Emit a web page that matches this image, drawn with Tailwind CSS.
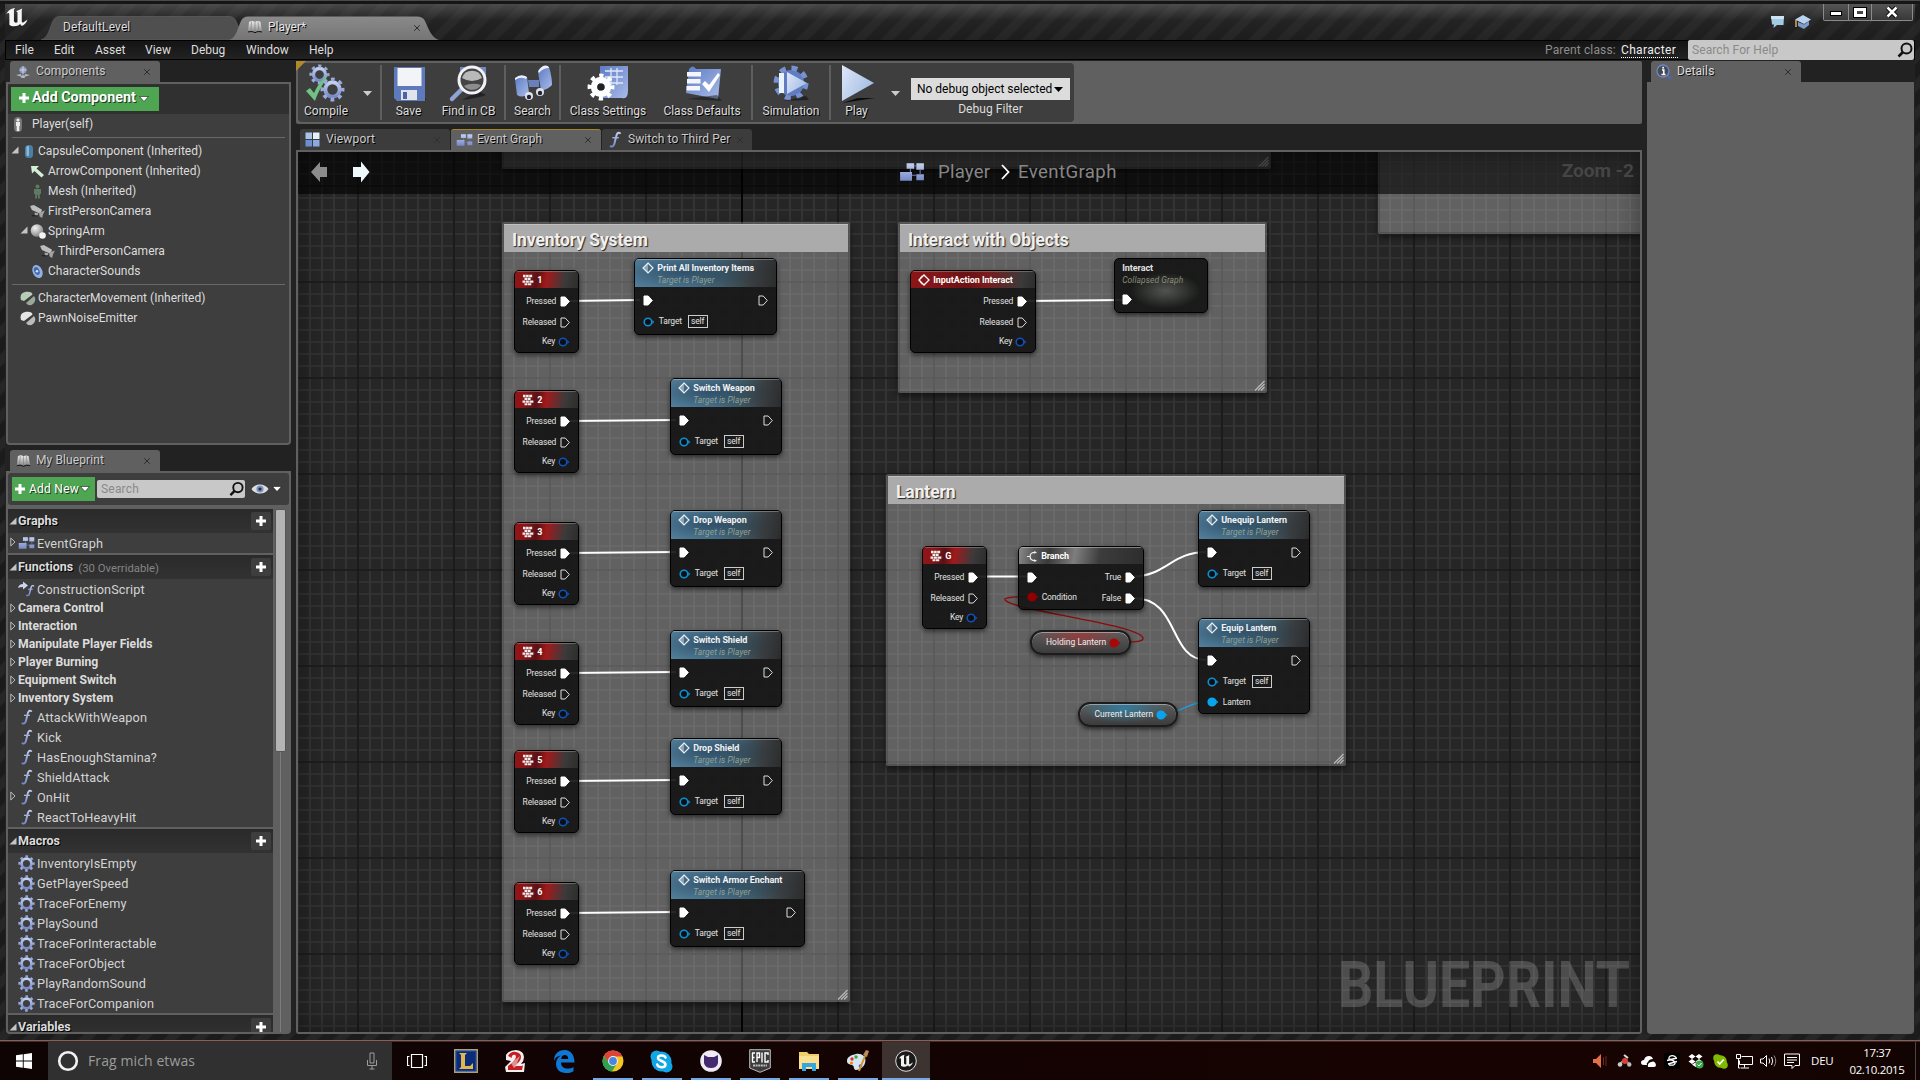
<!DOCTYPE html>
<html lang="en">
<head>
<meta charset="utf-8">
<title>Player - Blueprint Editor</title>
<script src="https://cdn.jsdelivr.net/npm/@tailwindcss/browser@4"></script>
</head>
<body class="w-[1920px] h-[1080px] overflow-hidden bg-[#222] text-[12px] leading-none text-[#dcdcdc] [font-family:Roboto,'Liberation_Sans',sans-serif] select-none">

<!-- shared icon symbols -->
<svg class="absolute w-0 h-0">
  <defs>
    <linearGradient id="blu" x1="0" y1="0" x2="0" y2="1"><stop offset="0" stop-color="#c3d0f0"/><stop offset="1" stop-color="#7688c6"/></linearGradient>
    <linearGradient id="blu2" x1="0" y1="0" x2="1" y2="1"><stop offset="0" stop-color="#5c7bc4"/><stop offset="1" stop-color="#a9bce8"/></linearGradient>
    <linearGradient id="gry" x1="0" y1="0" x2="0" y2="1"><stop offset="0" stop-color="#eee"/><stop offset="1" stop-color="#888"/></linearGradient>
    <radialGradient id="ball" cx=".35" cy=".3" r=".8"><stop offset="0" stop-color="#f4f4f4"/><stop offset="1" stop-color="#777"/></radialGradient>
    <linearGradient id="playg" x1="0" y1="0" x2="1" y2=".6"><stop offset="0" stop-color="#dfe7f8"/><stop offset="1" stop-color="#a3bde4"/></linearGradient>
  </defs>
  <symbol id="i-x" viewBox="0 0 8 8"><path d="M1.2 1.2 6.8 6.8M6.8 1.2 1.2 6.8" stroke="#2e2e2e" stroke-width="1"/></symbol>
  <symbol id="i-plus" viewBox="0 0 12 12"><path d="M4.5 1h3v3.5H11v3H7.500V11h-3V7.500H1v-3h3.500z" fill="#fff"/></symbol>
  <symbol id="i-down" viewBox="0 0 10 6"><path d="M.5.5h9L5 5.500z" fill="#fff" stroke="#000" stroke-width=".5"/></symbol>
  <symbol id="i-open" viewBox="0 0 8 8"><path d="M7.500.5V7.500H.5z" fill="#c4c4c4"/></symbol>
  <symbol id="i-closed" viewBox="0 0 6 10"><path d="M.8 1v8L5 5z" fill="none" stroke="#bbb" stroke-width="1"/></symbol>
  <symbol id="i-search" viewBox="0 0 16 16"><circle cx="9.500" cy="6.500" r="5" fill="none" stroke="#111" stroke-width="2"/><path d="M6 10 1.500 14.500" stroke="#111" stroke-width="2.600"/></symbol>
  <symbol id="i-book" viewBox="0 0 16 14"><path d="M2 2c2-1.500 4-1.500 6 0 2-1.500 4-1 5.500 0L15 11.500c-2-1-5-1-7 .5-2-1.500-5-1.500-7-.5z" fill="url(#gry)"/><path d="M8 2v9.500M4.500 1.500 4 10M11 1.500l.8 8.500" stroke="#777" stroke-width=".6"/><path d="M1 12c3-.8 5-.5 7 .8 2-1.300 4-1.600 7-.8" stroke="#111" fill="none"/></symbol>
  <symbol id="i-graph" viewBox="0 0 24 18"><path d="M7 1h7v5H7zM16 1h7v6h-7zM1 9h11v8H1zM16 11h7v5.500h-7z" fill="url(#blu)"/><path d="M14 3.500h2M12 12h4M10.500 6v3M19.500 7v4" stroke="#6f7fae"/></symbol>
  <symbol id="i-view" viewBox="0 0 15 15"><path d="M.5.5h6.500V7H.5z" fill="#a8c4e8"/><path d="M8 .5h6.500V7H8z" fill="#e6f2f6"/><path d="M.5 8h6.500v6.500H.5z" fill="#6d8fd0"/><path d="M8 8h6.500v6.500H8z" fill="#8caae0"/></symbol>
  <symbol id="i-f" viewBox="0 0 14 17"><path d="M12.500 2.800C11.500 1 9.300 1.300 8.600 4L6.300 13C5.700 15.400 3.600 16.200 2 15" fill="none" stroke="url(#blu)" stroke-width="2"/><path d="M4.300 6h6.500v1.400H4.300z" fill="#a3b2e0"/></symbol>
  <symbol id="i-gear" viewBox="0 0 24 24"><circle cx="12" cy="12" r="6.900" fill="none" stroke="url(#blu)" stroke-width="3.800"/><circle cx="12" cy="12" r="9.700" fill="none" stroke="#9aabdb" stroke-width="3.600" stroke-dasharray="3.600 4.018" stroke-dashoffset="1.800"/></symbol>
  <symbol id="i-gearw" viewBox="0 0 24 24"><circle cx="12" cy="12" r="6" fill="none" stroke="#fff" stroke-width="5.500"/><circle cx="12" cy="12" r="9.700" fill="none" stroke="#fff" stroke-width="3.600" stroke-dasharray="3.600 4.018" stroke-dashoffset="1.800"/></symbol>
  <symbol id="i-cam" viewBox="0 0 16 14"><path d="M0 1l4-1 9 5-2 4.500-9-4z" fill="#bdbdbd"/><path d="M10 8l6-2-2 4-1 4-3-2zM5 8l4 1-1 3-3-1z" fill="#a2a2a2"/><path d="M2 11.500h7" stroke="#111" stroke-width="1.500" opacity=".6"/></symbol>
  <symbol id="i-exec" viewBox="0 0 10 11"><path d="M1 1h4.200L9.300 5.500 5.200 10H1z" fill="#fff" stroke="#fff" stroke-linejoin="round"/></symbol>
  <symbol id="i-execo" viewBox="0 0 10 11"><path d="M1 1h4.200L9.300 5.500 5.200 10H1z" fill="none" stroke="#ddd" stroke-linejoin="round"/></symbol>
  <symbol id="i-fn" viewBox="0 0 12 12"><path d="M6 1l5 5-5 5-5-5z" fill="none" stroke="#e8eef2" stroke-width="1.200"/><path d="M6 1v10L1 6z" fill="#e8eef2" opacity=".45"/></symbol>
  <symbol id="i-event" viewBox="0 0 12 12"><path d="M6 1l5 5-5 5-5-5z" fill="none" stroke="#fff" stroke-width="1.300"/><path d="M4 1.500 1 6l3 4.500" stroke="#fff" fill="none" stroke-width=".8"/></symbol>
  <symbol id="i-key" viewBox="0 0 12 12"><path d="M1 .8h2.600v2.400H1zM4.100.8h2.600v2.400H4.100zM7.200.8h3v2.400h-3zM2.500 3.700h2.600v2.300H2.500zM5.600 3.700h3v2.300h-3zM.5 6.500h2.600v2.200H.5zM3.600 6.500h3.300v2.200H3.600zM7.400 6.500h4v2.200h-4zM2.500 9.200h3v2h-3zM6 9.200h3.300v2H6z" fill="#f0f0f0"/></symbol>
  <symbol id="i-branch" viewBox="0 0 12 12"><path d="M1 6h3M10 1.500C6 1.500 4.500 3 4.500 6s1.500 4.500 5.500 4.500" fill="none" stroke="#eee" stroke-width="1.300"/><path d="M9 0l3 1.500L9 3zM9 9l3 1.500L9 12z" fill="#eee"/></symbol>
  <symbol id="i-u" viewBox="0 0 24 22"><path d="M1 7.500C2 4 5.500 1.500 10 1L8.800 3v11.500c0 1.500 1.500 2.500 3.700 1.500V5.500L11 4.500 17.500 1.500 17 3.500v12l1.200 1L23 13c-1 3.500-3 5.500-6 7l-1.800-2.200c-2.500 3-8.700 3-11.200.7V8.500C4 5.800 2.500 6 1 7.500z" fill="#f4f4f4"/></symbol>
</svg>

<div class="flex flex-col w-[1920px] h-[1080px]">
<!-- ============ editor window ============ -->
<div class="h-[1041px] w-full flex flex-col border-t border-[#4a4a4a] bg-[repeating-linear-gradient(135deg,#1b1b1b_0_9px,#262626_11px_18px,#1b1b1b_20px)]">

  <!-- title bar -->
  <div class="h-[39px] shrink-0 pt-[4px] px-[5px] border-t-[3px] border-[#161616] flex flex-col">
  <div class="h-[36px] -mt-[4px] relative flex bg-[linear-gradient(to_bottom,rgba(100,100,100,.62),rgba(50,50,50,.35)_45%,rgba(34,34,34,.25))]">
    <svg class="w-[24px] h-[21px] mt-[3px] shrink-0"><use href="#i-u"/></svg>
    <div class="ml-[12px] mt-[12px] w-[202px] h-[24px] relative flex items-center pl-[22px]">
      <svg class="absolute inset-0 w-[202px] h-[24px]" viewBox="0 0 202 24"><path d="M0 24C7 22 8 14 12 5Q14 .5 19 .5H188Q193 .5 195 5C199 14 200 20 202 24z" fill="#4f4f4f" stroke="#666" stroke-width=".6"/></svg>
      <span class="relative -mt-[2px] [text-shadow:1px_1px_0_#000] tracking-[.1px]">DefaultLevel</span>
    </div>
    <div class="-ml-[14px] mt-[12px] w-[212px] h-[24px] relative flex items-center pl-[18px] pr-[20px]">
      <svg class="absolute inset-0 w-[212px] h-[24px]" viewBox="0 0 212 24"><defs><linearGradient id="tg" x1="0" y1="0" x2="0" y2="1"><stop offset="0" stop-color="#8a8a8a"/><stop offset="1" stop-color="#757575"/></linearGradient></defs><path d="M0 24C7 22 8 14 12 5Q14 .5 19 .5H188Q194 .5 196 5C200 14 203 22 210 24z" fill="url(#tg)"/></svg>
      <svg class="relative w-[16px] h-[14px] -mt-[2px]"><use href="#i-book"/></svg>
      <span class="relative ml-[5px] flex-1 -mt-[2px] [text-shadow:1px_1px_0_#000] text-[#e6e6e6]">Player*</span>
      <svg class="relative w-[8px] h-[8px]"><use href="#i-x"/></svg>
    </div>
    <div class="flex-1"></div>
    <svg class="w-[16px] h-[16px] mt-[10px]" viewBox="0 0 16 16"><path d="M1 2h13l-.5 9H7l-3.500 3 .5-3.500H2z" fill="#a5cbe4"/><path d="M1 2h13l-.2 3H1.200z" fill="#cde4f2"/></svg>
    <svg class="w-[18px] h-[16px] mt-[10px] ml-[8px]" viewBox="0 0 18 16"><path d="M9 1l8 4.500L10 10 1 5.500z" fill="#b9d2ee"/><path d="M4 8v4l6 3 5-4V7l-5 3.500z" fill="#7c9dcc"/><path d="M2 6v7" stroke="#e0a860" stroke-width="1.500"/></svg>
    <div class="flex ml-[11px] h-[17px] mr-[2px] border border-t-0 border-[#8a8a8a] rounded-b-[2px] bg-[linear-gradient(#555,#383838)]">
      <div class="w-[25px] border-r border-[#8a8a8a] grid place-items-center"><div class="w-[12px] h-[5px] bg-white border border-black mt-[3px]"></div></div>
      <div class="w-[23px] border-r border-[#8a8a8a] grid place-items-center"><div class="w-[12px] h-[9px] border-[3px] border-white outline outline-black"></div></div>
      <div class="w-[40px] grid place-items-center"><svg class="w-[14px] h-[12px]" viewBox="0 0 14 12"><path d="M2.500 1.500l9 9M11.500 1.500l-9 9" stroke="#000" stroke-width="4.500"/><path d="M2.500 1.500l9 9M11.500 1.500l-9 9" stroke="#fff" stroke-width="2.600"/></svg></div>
    </div>
  </div>
  </div>

  <!-- menu bar -->
  <div class="h-[20px] shrink-0 mx-[5px] border border-black bg-[linear-gradient(#141414,#222)] flex items-center pl-[9px] text-[#dedede]">
    <span class="w-[39px]">File</span><span class="w-[41px]">Edit</span><span class="w-[50px]">Asset</span><span class="w-[46px]">View</span><span class="w-[55px]">Debug</span><span class="w-[63px]">Window</span><span>Help</span>
    <span class="flex-1"></span>
    <span class="text-[#8e8e8e] w-[76px] tracking-[.15px]">Parent class:</span>
    <span class="w-[57px] mr-[10px] border-b border-dotted border-white pb-px mt-[2px] tracking-[.35px] text-[#eee]">Character</span>
    <div class="w-[226px] h-[20px] bg-[#c8c8c8] rounded-[2px] flex items-center justify-between pl-[4px] pr-[1px] text-[#8a8a8a]"><span class="tracking-[.1px]">Search For Help</span><svg class="w-[16px] h-[16px]"><use href="#i-search"/></svg></div>
  </div>

  <!-- docking area -->
  <div class="flex-1 mx-[5px] mb-[6px] bg-[#222] flex pt-[1px] pl-[1px] min-h-0">

    <!-- left column -->
    <div class="w-[285px] flex flex-col">
      <div class="h-[21px] ml-[4px] w-[150px] bg-[#606060] rounded-t-[3px] flex items-center pl-[6px] pr-[9px]">
        <svg class="w-[14px] h-[14px]" viewBox="0 0 14 14"><circle cx="7" cy="5" r="3.500" fill="#8b9cc0"/><path d="M0 10l5-1 1 3zM14 10l-5-1-1 3zM7 9l2 4H5z" fill="#b5b9c6"/><path d="M7 1v8M3.500 5h7" stroke="#dde" stroke-width=".8"/></svg>
        <span class="ml-[6px] flex-1 text-[#ccc] tracking-[.1px] [text-shadow:1px_1px_0_#222] -mt-[2px]">Components</span>
        <svg class="w-[8px] h-[8px]"><use href="#i-x"/></svg>
      </div>
      <div class="h-[363px] border-2 border-[#606060] rounded-b-[4px] bg-[#3e3e3e]">
        <div class="h-[30px] rounded-t-[3px] bg-[#303030] pl-[3px] pt-[3px]">
          <div class="w-[148px] h-[24px] bg-[#4ea552] flex items-center pl-[7px] pb-[3px] text-white font-bold text-[14.300px] [text-shadow:1px_1px_0_#1c3c1c]"><svg class="w-[12px] h-[12px] mr-[2px]"><use href="#i-plus"/></svg>Add Component<svg class="w-[10px] h-[6px] ml-[3px] mt-[3px]"><use href="#i-down"/></svg></div>
        </div>
        <div id="components" class="flex flex-col"></div>
      </div>

      <div class="h-[21px] mt-[5px] ml-[4px] w-[150px] bg-[#606060] rounded-t-[3px] flex items-center pl-[6px] pr-[9px]">
        <svg class="w-[15px] h-[14px]"><use href="#i-book"/></svg>
        <span class="ml-[5px] flex-1 text-[#ccc] tracking-[.1px] [text-shadow:1px_1px_0_#222] -mt-[2px]">My Blueprint</span>
        <svg class="w-[8px] h-[8px]"><use href="#i-x"/></svg>
      </div>
      <div class="flex-1 min-h-0 border-2 border-[#606060] rounded-b-[4px] bg-[#606060] flex flex-col overflow-hidden">
        <div class="h-[32px] shrink-0 rounded-[3px] bg-[#3e3e3e] flex items-center pl-[4px]">
          <div class="w-[83px] h-[24px] bg-[#4ea552] flex items-center pl-[2px] text-white tracking-[.25px] [text-shadow:1px_1px_0_#1c3c1c]"><svg class="w-[12px] h-[12px] mr-[3px]"><use href="#i-plus"/></svg><span class="w-[49px] whitespace-nowrap">Add New</span><svg class="w-[10px] h-[6px] ml-[2px] shrink-0"><use href="#i-down"/></svg></div>
          <div class="w-[148px] h-[18px] ml-[2px] bg-[#c8c8c8] rounded-[2px] flex items-center justify-between pl-[4px] pr-px text-[#8a8a8a]"><span class="tracking-[.2px]">Search</span><svg class="w-[15px] h-[16px]"><use href="#i-search"/></svg></div>
          <svg class="w-[18px] h-[12px] ml-[6px]" viewBox="0 0 18 12"><path d="M.5 6C4 0 14 0 17.500 6 14 12 4 12 .5 6z" fill="#d9dce0"/><circle cx="9" cy="6" r="3.600" fill="#7c90bd"/><circle cx="9" cy="6" r="1.600" fill="#222b40"/></svg>
          <svg class="w-[10px] h-[6px] ml-[3px] shrink-0"><use href="#i-down"/></svg>
        </div>
        <div class="flex-1 min-h-0 flex pt-[4px]">
          <div id="blueprint" class="w-[265px] flex flex-col overflow-hidden"></div>
          <div class="flex-1 flex flex-col items-center pr-px">
            <div class="w-[11px] h-[243px] bg-[#b4b4b4] border border-[#555] rounded-[2px] shrink-0"></div>
            <div class="w-px flex-1 bg-[#7c7c7c]"></div>
          </div>
        </div>
      </div>
    </div>

    <!-- centre column -->
    <div class="ml-[5px] w-[1346px] flex flex-col">
      <div class="h-[63px] bg-[#606060] rounded-[2px] p-[2px] relative">
        <div class="w-[776px] h-[59px] rounded-[4px] bg-[#3e3e3e] flex items-stretch">
          <div class="w-[82px] flex">
            <div class="w-[57px] pl-[6px] flex flex-col">
              <svg class="w-[42px] h-[40px] mt-[1px]" viewBox="0 0 42 40"><use href="#i-gear" x="5" y="0" width="21" height="21"/><use href="#i-gear" x="16" y="13" width="25" height="25"/><path d="M2 27l4-3 4 5C13 22 18 15 25 10 20 18 14 28 11 37z" fill="#6fc184"/></svg>
              <span class="mt-[1px] [text-shadow:1px_1px_0_#000]">Compile</span>
            </div>
            <svg class="w-[9px] h-[5px] mt-[28px] ml-[8px]" viewBox="0 0 9 5"><path d="M0 0h9L4.500 5z" fill="#ccc"/></svg>
          </div>
          <div class="w-[2px] my-[2px] bg-[#5e5e5e]"></div>
          <div class="w-[122px] flex">
            <div class="w-[53px] flex flex-col items-center">
              <svg class="w-[36px] h-[40px] mt-[1px]" viewBox="0 0 36 40"><path d="M4 36h31l-3-7z" fill="#111" opacity=".7"/><path d="M3 3h31v34H6l-3-3z" fill="#5f79bd"/><path d="M6.500 4h24v18h-24z" fill="#f2f4f8"/><path d="M10 26h16v10H10z" fill="#dfe3ec"/><path d="M12 28h4v7h-4z" fill="#4b64a6"/></svg>
              <span class="mt-[1px] [text-shadow:1px_1px_0_#000]">Save</span>
            </div>
            <div class="w-[67px] flex flex-col items-center">
              <svg class="w-[42px] h-[40px] mt-[1px]" viewBox="0 0 42 40"><path d="M14 36q16-2 24-5l-8-4z" fill="#111" opacity=".6"/><path d="M30 3h8v18h-8zM12 3h8v8h-8z" fill="#7488bd"/><path d="M14 25 4 35" stroke="#8fa3d4" stroke-width="4.500" stroke-linecap="round"/><circle cx="24" cy="16" r="13" fill="#444" stroke="#f0f2f6" stroke-width="3"/><path d="M14 14A10.500 10.500 0 0 1 34 14Q24 20 14 14z" fill="#b9b9b9"/><path d="M15.500 22Q24 18 33 21a10.500 10.500 0 0 1-17 1z" fill="#8d8d8d"/></svg>
              <span class="mt-[1px] whitespace-nowrap [text-shadow:1px_1px_0_#000]">Find in CB</span>
            </div>
          </div>
          <div class="w-[2px] my-[2px] bg-[#5e5e5e]"></div>
          <div class="w-[53px] flex flex-col items-center">
            <svg class="w-[40px] h-[40px] mt-[1px]" viewBox="0 0 40 40"><path d="M2 15q5-5 12-2l2 16q-6 6-12 2z" fill="url(#blu2)"/><path d="M25 8q6-7 11-5 3 10 3 18-6 6-11 5z" fill="url(#blu2)"/><path d="M2 14q6-5 12-1l-1 2q-5-3-11 1zM25 7q5-7 10-5l1 2q-6 0-10 5z" fill="#eef"/><path d="M15 16h11v7H16z" fill="#6b80bb"/><circle cx="16" cy="32" r="4" fill="#dfe2ea"/><circle cx="27" cy="28" r="4" fill="#dfe2ea"/><circle cx="16" cy="33" r="2.200" fill="#223"/><circle cx="27" cy="29" r="2.200" fill="#223"/></svg>
            <span class="mt-[1px] [text-shadow:1px_1px_0_#000]">Search</span>
          </div>
          <div class="w-[2px] my-[2px] bg-[#5e5e5e]"></div>
          <div class="w-[190px] flex">
            <div class="w-[94px] flex flex-col items-center">
              <svg class="w-[42px] h-[40px] mt-[1px]" viewBox="0 0 42 40"><path d="M13 2h28v24q0 10-6 8H13z" fill="url(#blu2)"/><path d="M18 7h18M18 13h18M18 19h18M24 4v17M30 4v17" stroke="#dfe9fa" stroke-width="1.300"/><use href="#i-gearw" x="0" y="9" width="28" height="28"/><circle cx="14" cy="23" r="3.600" fill="#222"/></svg>
              <span class="mt-[1px] whitespace-nowrap [text-shadow:1px_1px_0_#000]">Class Settings</span>
            </div>
            <div class="w-[94px] flex flex-col items-center">
              <svg class="w-[42px] h-[40px] mt-[1px]" viewBox="0 0 42 40"><path d="M8 5q4-5 7 0h25l-3 30-32-6z" fill="url(#blu2)"/><path d="M6 35l35 2-5-6z" fill="#111" opacity=".5"/><path d="M6 8h14v4.500H6zM6 15h13.500v4.500H6zM5.500 22h13.500v4.500H5.500z" fill="#f4f6fb"/><path d="M21 20l3-3 4 4 9-12 2 2-11 17z" fill="#fff"/></svg>
              <span class="mt-[1px] whitespace-nowrap [text-shadow:1px_1px_0_#000]">Class Defaults</span>
            </div>
          </div>
          <div class="w-[2px] my-[2px] bg-[#5e5e5e]"></div>
          <div class="w-[76px] flex flex-col items-center">
            <svg class="w-[42px] h-[40px] mt-[1px]" viewBox="0 0 42 40"><circle cx="21" cy="19" r="13" fill="#5f7cc4"/><circle cx="21" cy="19" r="15" fill="none" stroke="#7791d2" stroke-width="5" stroke-dasharray="6 5.780"/><path d="M9 9h5v20H9z" fill="#e8f4fa"/><path d="M17 8l20 11-20 11z" fill="url(#playg)"/><path d="M14 37l22-5 3 4z" fill="#111" opacity=".6"/></svg>
            <span class="mt-[1px] [text-shadow:1px_1px_0_#000]">Simulation</span>
          </div>
          <div class="w-[2px] my-[2px] bg-[#5e5e5e]"></div>
          <div class="w-[80px] flex">
            <div class="w-[51px] flex flex-col items-center">
              <svg class="w-[38px] h-[40px] mt-[1px]" viewBox="0 0 38 40"><path d="M4 39l33-5H20z" fill="#000" opacity=".8"/><path d="M4 1l32 18L4 37z" fill="url(#playg)"/></svg>
              <span class="mt-[1px] [text-shadow:1px_1px_0_#000]">Play</span>
            </div>
            <svg class="w-[9px] h-[5px] mt-[28px] ml-[9px]" viewBox="0 0 9 5"><path d="M0 0h9L4.500 5z" fill="#ccc"/></svg>
          </div>
          <div class="flex flex-col items-center pt-[15px]">
            <div class="w-[159px] h-[22px] bg-[#dcdcdc] flex items-center justify-between pl-[6px] pr-[7px] text-black"><span class="whitespace-nowrap tracking-[-.02px]">No debug object selected</span><svg class="w-[9px] h-[5px] shrink-0" viewBox="0 0 9 5"><path d="M0 0h9L4.500 5z"/></svg></div>
            <span class="mt-[3px] tracking-[.05px]">Debug Filter</span>
          </div>
        </div>
        <svg class="absolute left-0 top-0 w-[10px] h-[10px]" viewBox="0 0 10 10"><path d="M0 0h10L0 10z" fill="#b08a2a"/></svg>
      </div>

      <!-- document tabs -->
      <div class="h-[21px] mt-[5px] ml-[4px] flex gap-[1px] [text-shadow:1px_1px_0_#000]">
        <div class="w-[150px] bg-[#3c3c3c] rounded-t-[3px] flex items-center pl-[5px] pr-[9px]"><svg class="w-[15px] h-[15px]"><use href="#i-view"/></svg><span class="ml-[6px] flex-1 -mt-[2px] text-[#ccc] tracking-[.15px]">Viewport</span><svg class="w-[8px] h-[8px]"><use href="#i-x"/></svg></div>
        <div class="w-[150px] bg-[#606060] border-t border-[#a58526] rounded-t-[3px] flex items-center pl-[5px] pr-[9px]"><svg class="w-[17px] h-[14px]"><use href="#i-graph"/></svg><span class="ml-[4px] flex-1 -mt-[2px] text-[#ccc] tracking-[.1px]">Event Graph</span><svg class="w-[8px] h-[8px]"><use href="#i-x"/></svg></div>
        <div class="w-[150px] bg-[#3c3c3c] rounded-t-[3px] flex items-center pl-[6px] pr-[8px]"><svg class="w-[14px] h-[17px]"><use href="#i-f"/></svg><span class="ml-[6px] flex-1 -mt-[2px] text-[#ccc] tracking-[.1px] whitespace-nowrap">Switch to Third Per</span><svg class="w-[8px] h-[8px]"><use href="#i-x"/></svg></div>
      </div>

      <!-- graph view -->
      <div class="flex-1 min-h-0 border-2 border-[#606060] rounded-b-[3px] relative overflow-hidden bg-[#262626]">
        <!-- canvas in screen coordinates -->
        <div class="absolute -left-[298px] -top-[152px] w-[1920px] h-[1080px]">
          <svg class="absolute inset-0 w-[1920px] h-[1080px]" viewBox="0 0 1920 1080">
            <defs>
              <pattern id="minor" x="352" y="276" width="12" height="12" patternUnits="userSpaceOnUse"><path d="M6 0V12M0 6H12" stroke="#353535" stroke-width="1.700"/></pattern>
              <pattern id="major" x="310" y="234" width="96" height="96" patternUnits="userSpaceOnUse"><path d="M48 0V96M0 48H96" stroke="#161616" stroke-width="1.700"/></pattern>
            </defs>
            <rect width="1920" height="1080" fill="url(#minor)"/><rect width="1920" height="1080" fill="url(#major)"/>
            <path d="M742 0V1080" stroke="#000" stroke-width="1.700"/>
          </svg>
          <div id="comments"></div>
          <svg class="absolute inset-0 w-[1920px] h-[1080px]" viewBox="0 0 1920 1080" fill="none" stroke="#fff" stroke-width="2">
            <path d="M567 301 640 300M567 421 676 420M567 553 676 552M567 673 676 672M567 781 676 780M567 913 676 912M1024 301 1124 300M975 576.500H1028"/>
            <path d="M1133 576.500C1165 576.500 1172 552 1206 552M1133 598C1180 598 1168 659 1206 660" stroke-width="2"/>
            <path d="M1113 642C1130 642 1144 642.500 1143 638 1140 629 1090 621 1036 610 1012 605 1004 601 1005 599 1007 596.500 1018 597 1030 596.500" stroke="#8c0a0a" stroke-width="1.300"/>
            <path d="M1162 714C1182 714 1186 702 1208 702" stroke="#1f9ad6" stroke-width="1.400"/>
          </svg>
          <div id="nodes"></div>
          <svg class="absolute left-[1330px] top-[930px] w-[308px] h-[96px]" viewBox="0 0 308 96"><text x="8" y="76.500" textLength="292" lengthAdjust="spacingAndGlyphs" class="text-[65px] font-bold fill-white/18">BLUEPRINT</text></svg>
        </div>
        <div class="absolute inset-0 shadow-[inset_0_0_28px_rgba(0,0,0,.4)]"></div>
        <!-- breadcrumb strip -->
        <div class="absolute inset-x-0 top-0 h-[42px] bg-black/60 flex items-center pl-[12px] pb-[2px]">
          <svg class="w-[18px] h-[24px]" viewBox="0 0 18 24"><path d="M1 12 10 2v5h7v10h-7v5z" fill="#8c8c8c"/></svg>
          <svg class="w-[18px] h-[24px] ml-[24px]" viewBox="0 0 18 24"><path d="M17.500 12 9 1.500V7H1v10h8v5.500z" fill="#eef8fa"/></svg>
          <svg class="w-[26px] h-[20px] ml-[529px]" viewBox="0 0 24 18"><use href="#i-graph" width="24" height="18"/></svg>
          <span class="ml-[13px] text-[18.600px] text-[#868686] w-[63px] tracking-[.2px]">Player</span>
          <svg class="w-[9px] h-[16px]" viewBox="0 0 9 16"><path d="M1 1l6.500 7L1 15" fill="none" stroke="#fff" stroke-width="1.800"/></svg>
          <span class="ml-[8px] text-[18.600px] text-[#868686] tracking-[.4px]">EventGraph</span>
          <span class="ml-auto mr-[6px] text-[19px] font-bold text-[#454545] -mt-[4px]">Zoom -2</span>
        </div>
      </div>
    </div>

    <!-- details column -->
    <div class="ml-[5px] w-[267px] flex flex-col">
      <div class="h-[21px] ml-[4px] w-[150px] bg-[#606060] rounded-t-[3px] flex items-center pl-[5px] pr-[9px]">
        <svg class="w-[16px] h-[16px]" viewBox="0 0 16 16"><path d="M11 11l4 4" stroke="#4d67a8" stroke-width="2.500"/><circle cx="7" cy="7" r="6" fill="#444a58" stroke="#6d86c4" stroke-width="1.300"/><path d="M6 6h1.800v4.500M5.500 10.500h4" stroke="#fff" stroke-width="1.500" fill="none"/><path d="M6.300 2.800h1.800v1.800H6.300z" fill="#fff"/></svg>
        <span class="ml-[5px] flex-1 text-[#ddd] tracking-[.1px] [text-shadow:1px_1px_0_#111] -mt-[2px]">Details</span>
        <svg class="w-[8px] h-[8px]"><use href="#i-x"/></svg>
      </div>
      <div class="flex-1 bg-[#606060] rounded-b-[4px]"></div>
    </div>
  </div>
  <div class="h-px bg-[#6a6a6a] shrink-0"></div>
</div>

<!-- ============ taskbar ============ -->
<div class="h-[39px] bg-[linear-gradient(to_right,#0e0404,#140303_50%,#170302_80%,#120402)] border-t border-[#5a2019] flex items-stretch [font-family:'Open_Sans','Noto_Sans',sans-serif] text-white">
  <div class="w-[48px] bg-[#0e0404] grid place-items-center"><svg class="w-[16px] h-[16px]" viewBox="0 0 16 16"><path d="M0 2.300 6.800 1.300V7.600H0zM7.700 1.200 16 0V7.600H7.700zM0 8.400H6.800V14.700L0 13.700zM7.700 8.400H16V16L7.700 14.800z" fill="#fff"/></svg></div>
  <div class="w-[344px] bg-[#303030] flex items-center pl-[9px] pr-[14px]">
    <svg class="w-[22px] h-[22px]" viewBox="0 0 22 22"><circle cx="11" cy="11" r="8.800" fill="none" stroke="#f2f2f2" stroke-width="2.600"/></svg>
    <span class="ml-[9px] flex-1 text-[14px] text-[#9c9c9c] leading-[20px] tracking-[.1px]">Frag mich etwas</span>
    <svg class="w-[12px] h-[18px]" viewBox="0 0 12 18"><path d="M4 1h4v10H4zM1.500 8v5.500h9V8M6 13.500V17M3.500 17h5" fill="none" stroke="#9c9c9c"/></svg>
  </div>
  <div class="w-[49px] grid place-items-center"><svg class="w-[20px] h-[16px]" viewBox="0 0 20 16"><path d="M4.500 1.500h11v13h-11zM2.500 3.500H.5v9h2M17.500 3.500h2v9h-2" fill="none" stroke="#fff" stroke-width="1.200"/></svg></div>
  <div class="w-[49px] grid place-items-center"><svg class="w-[24px] h-[24px]" viewBox="0 0 24 24"><path d="M.7.7h22.600v22.600H.7z" fill="#12409a" stroke="#b0a16c" stroke-width="1.400"/><path d="M3 3h18v18H3z" fill="#0c2c78"/><path d="M5 4h8l-2 2v11h5l3-3v6H5l2-2V6z" fill="#e2b84e"/></svg></div>
  <div class="w-[49px] grid place-items-center"><svg class="w-[24px] h-[24px]" viewBox="0 0 24 24"><path d="M3 6Q6 1 13 1q8 1 8 7 0 4-3 7l4-1-1 9H3l-1-5 6-6-5-1z" fill="#f4eeee"/><path d="M5 7Q8 2 13 3q5 1 5 5 0 4-6 9h7l1-1-1 5H5v-4q7-5 8-9 0-3-3-2-2 1-1 3z" fill="#c41d22"/><path d="M8 14l9-7-3 7 4-1-7 6z" fill="#f4eeee" opacity=".55"/></svg></div>
  <div class="w-[49px] grid place-items-center"><svg class="w-[22px] h-[24px]" viewBox="0 0 22 24"><path d="M1 12C1 5 5 1 11.500 1 18 1 21.500 6 21.500 13.500H8c0 4 3 6 6.500 6 2.500 0 4.500-.6 6-1.600v4.300C18.500 23.500 16 24 13 24 6.500 24 3 20 3 15c0-4 2-7 5-8.500C4 7 2 9 1 12zM8.200 10h7c0-2.500-1.200-4-3.400-4-2 0-3.300 1.500-3.600 4z" fill="#0f78d4"/></svg></div>
  <div class="w-[49px] grid place-items-center relative"><svg class="w-[22px] h-[22px]" viewBox="0 0 22 22"><circle cx="11" cy="11" r="10.500" fill="#f3c623"/><path d="M1.800 6A10.500 10.500 0 0 1 20.500 6.500H11L7 13z" fill="#dd4437"/><path d="M1.800 6A10.500 10.500 0 0 0 10 21.500L14.500 14 7 13z" fill="#2fa24f"/><circle cx="11" cy="11" r="4.900" fill="#f2f2f2"/><circle cx="11" cy="11" r="3.900" fill="#4a86e0"/></svg><div class="absolute bottom-0 w-[40px] h-[2px] bg-[#76a9ea]"></div></div>
  <div class="w-[49px] grid place-items-center relative"><svg class="w-[23px] h-[23px]" viewBox="0 0 23 23"><circle cx="11.500" cy="11.500" r="10" fill="#10a7e4"/><circle cx="6.500" cy="6.500" r="6" fill="#10a7e4"/><circle cx="16.500" cy="16.500" r="6" fill="#10a7e4"/><path d="M15.500 7.500C14.500 5 8 4.800 8 8c0 3.500 7.500 2.500 7.500 6.500 0 3.500-7.500 3.500-8.300 0" fill="none" stroke="#fff" stroke-width="2.500" stroke-linecap="round"/></svg><div class="absolute bottom-0 w-[40px] h-[2px] bg-[#76a9ea]"></div></div>
  <div class="w-[49px] grid place-items-center relative"><svg class="w-[22px] h-[22px]" viewBox="0 0 22 22"><circle cx="11" cy="11" r="10.800" fill="#efeaf6"/><path d="M4 5l4 2h6l4-2v8q-1 5-7 5t-7-5z" fill="#45296f"/></svg><div class="absolute bottom-0 w-[40px] h-[2px] bg-[#76a9ea]"></div></div>
  <div class="w-[49px] grid place-items-center relative"><svg class="w-[22px] h-[24px]" viewBox="0 0 22 24"><path d="M.7.7h20.600V19L11 23.300.7 19z" fill="#3c3c3c" stroke="#bbb"/><path d="M3 4h3M3 8.500h2.500M3 13h3M3.500 4v9M8 13V4h2.500v4.500H8M13 3.500V13.500M19 6V4h-3v9h3v-2" fill="none" stroke="#fff" stroke-width="1.400"/><path d="M4 16.500h14" stroke="#bbb" stroke-width="2" stroke-dasharray="2 .6"/></svg><div class="absolute bottom-0 w-[40px] h-[2px] bg-[#76a9ea]"></div></div>
  <div class="w-[49px] grid place-items-center relative"><svg class="w-[22px] h-[20px]" viewBox="0 0 22 20"><path d="M1 1h8l2 2h10v15H1z" fill="#efcf68"/><path d="M1 5h20v13H1z" fill="#fbe18f"/><path d="M4 20v-8h14v8h-4v-4H8v4z" fill="#35a7de"/></svg><div class="absolute bottom-0 w-[40px] h-[2px] bg-[#76a9ea]"></div></div>
  <div class="w-[49px] grid place-items-center relative"><svg class="w-[24px] h-[24px]" viewBox="0 0 24 24"><path d="M10 5c7-1 11 4 9 9-1 4-5 7-9 7-3 0-1-4-4-5s-5-1-5-4c0-4 4-6 9-7z" fill="#d6e6f2"/><circle cx="6" cy="10" r="1.700" fill="#d33"/><circle cx="10" cy="8" r="1.700" fill="#3a3"/><circle cx="5.500" cy="14" r="1.500" fill="#e80"/><circle cx="14.500" cy="17" r="1.800" fill="#36c"/><path d="M13 22 19 7" stroke="#d89232" stroke-width="2"/><path d="M17 6l3-5 3 1-2 6z" fill="#b98a5a"/></svg><div class="absolute bottom-0 w-[40px] h-[2px] bg-[#76a9ea]"></div></div>
  <div class="w-[48px] bg-[#3d3432] grid place-items-center relative"><svg class="w-[22px] h-[22px]" viewBox="0 0 22 22"><circle cx="11" cy="11" r="10.300" fill="#1a1a1a" stroke="#ddd"/><use href="#i-u" x="3.500" y="4" width="15" height="14"/></svg><div class="absolute bottom-0 w-[48px] h-[2px] bg-[#76a9ea]"></div></div>
  <div class="flex-1"></div>
  <div class="flex items-center">
    <div class="w-[24px] grid place-items-center"><svg class="w-[15px] h-[14px]" viewBox="0 0 15 14"><path d="M0 5h3l5-5v14L3 9H0z" fill="#e2714a"/><path d="M10.500 3v8M13 2v10" stroke="#6b2a18"/></svg></div>
    <div class="w-[24px] grid place-items-center"><svg class="w-[15px] h-[14px]" viewBox="0 0 15 14"><path d="M3 10 8 5l4 5" stroke="#999" stroke-width="2" fill="none"/><circle cx="8" cy="7" r="3" fill="#d8403a"/><circle cx="3" cy="10.500" r="2.300" fill="#ccc"/><circle cx="12.300" cy="10.500" r="2.200" fill="#bbb"/><path d="M7 1l4 3" stroke="#ddd" stroke-width="2"/></svg></div>
    <div class="w-[24px] grid place-items-center"><svg class="w-[15px] h-[11px]" viewBox="0 0 15 11"><path d="M3 9Q0 9 0 6.500T3 4q1-4 5-4 3 0 4 3-4 0-5 3-2 1-1 3zM7 11q-1-4 3-5 4-2 5 3 0 2-2 2z" fill="#fff"/></svg></div>
    <div class="w-[24px] grid place-items-center"><svg class="w-[16px] h-[16px] bg-black" viewBox="0 0 16 16"><path d="M12 4.500C9 1 4 3 5 6q4 1 6 3 1 4-6 3M3 7.500 13 5M4 11l9-2.500" fill="none" stroke="#fff" stroke-width="1.300"/></svg></div>
    <div class="w-[24px] grid place-items-center"><svg class="w-[16px] h-[16px]" viewBox="0 0 16 16"><path d="M4 1l3.500 2.500L4 6 .5 3.500zM11 1l3.500 2.500L11 6 7.500 3.500zM4 6l3.500 2.500L4 11 .5 8.500zM11 6l3.500 2.500L11 11 7.500 8.500zM4 11.500l3.500-2 3.500 2-3.500 2.500z" fill="#fff"/><circle cx="11.500" cy="11.500" r="4" fill="#3aa648"/><path d="M9.500 11.500l1.500 1.500 2.500-3" stroke="#fff" fill="none"/></svg></div>
    <div class="w-[24px] grid place-items-center"><svg class="w-[15px] h-[15px]" viewBox="0 0 15 15"><circle cx="7.500" cy="7.500" r="6.300" fill="#7fba00"/><circle cx="4" cy="4" r="3.800" fill="#7fba00"/><circle cx="11" cy="11" r="3.800" fill="#7fba00"/><path d="M4.500 7.500l2.200 2.500 4-4.500" stroke="#fff" stroke-width="1.700" fill="none"/></svg></div>
    <div class="w-[24px] grid place-items-center"><svg class="w-[17px] h-[15px]" viewBox="0 0 17 15"><path d="M5.500 2.500h11v8h-13v-4M.5.5h4v4h-4zM8.500 10.500v3M5 14h8M2.500 4.500V14h2" fill="none" stroke="#fff"/></svg></div>
    <div class="w-[24px] grid place-items-center"><svg class="w-[17px] h-[14px]" viewBox="0 0 17 14"><path d="M.5 5h2.500L6.500 1.500v11L3 9H.5zM9 4.500q1.500 2.500 0 5M11.500 3q2.500 4 0 8" fill="none" stroke="#fff"/><path d="M14 1.500q3.500 5.500 0 11" fill="none" stroke="#888"/></svg></div>
    <div class="w-[24px] grid place-items-center"><svg class="w-[16px] h-[17px]" viewBox="0 0 16 17"><path d="M.5 1h15v11.500H11L8 15.500 8 12.500H.5zM3 4.500h10M3 7h10M3 9.500h7" fill="none" stroke="#fff"/></svg></div>
    <span class="ml-[7px] w-[22px] text-[11.500px] tracking-[-.2px]">DEU</span>
    <div class="ml-[16px] w-[56px] text-center text-[11.500px] leading-[17px] tracking-[-.35px] whitespace-nowrap -mt-px"><div>17:37</div><div>02.10.2015</div></div>
    <div class="ml-[10px] w-px h-[38px] bg-[#4a4442] mr-[4px]"></div>
  </div>
</div>
</div>

<script>
const ico = (id, cls) => `<svg class="${cls}"><use href="#${id}"/></svg>`;

/* ---- component tree ---- */
const capsule = '<svg class="w-[15px] h-[15px]" viewBox="0 0 15 15"><rect x="4" y="1" width="8" height="13" rx="3.500" fill="#4a7fa6"/><rect x="5.500" y="2" width="2.500" height="10" rx="1" fill="#8db8d4"/></svg>';
const arrow = '<svg class="w-[15px] h-[15px]" viewBox="0 0 15 15"><path d="M1 2l8 0-2.500 2.500L14 11l-2.500 2.500L4.500 7 2 9.500z" fill="#d3efd6"/></svg>';
const person = (c) => `<svg class="w-[15px] h-[15px]" viewBox="0 0 15 15"><circle cx="7.500" cy="2.500" r="2" fill="${c}"/><path d="M4 5h7v5H9.800v4.500H8V11H7v3.500H5.200V10H4z" fill="${c}"/></svg>`;
const player = '<svg class="w-[10px] h-[15px]" viewBox="0 0 10 15"><rect x="1" y="0" width="8" height="15" rx="4" fill="#777"/><circle cx="5" cy="3" r="1.600" fill="#eee"/><path d="M3 5h4v4H6.300v5H3.700V9H3z" fill="#eee"/></svg>';
const arm = '<svg class="w-[16px] h-[15px]" viewBox="0 0 16 15"><circle cx="7" cy="6.500" r="6.300" fill="url(#ball)"/><circle cx="12.500" cy="11.500" r="3.300" fill="#f4f4f4"/></svg>';
const sound = '<svg class="w-[15px] h-[15px]" viewBox="0 0 15 15"><ellipse cx="7.500" cy="7.500" rx="4.800" ry="6.800" transform="rotate(-25 7.500 7.500)" fill="#8fb1e6"/><ellipse cx="6.800" cy="7" rx="2.600" ry="4" transform="rotate(-25 6.800 7)" fill="#46679f"/><circle cx="7" cy="7.300" r="1.300" fill="#c9ddf8"/></svg>';
const move = (c) => `<svg class="w-[16px] h-[15px]" viewBox="0 0 16 15"><path d="M1 9Q-1 2 6 .8 12 0 12.500 3.500L4 10z" fill="${c}"/><path d="M6 12l8-7q3 4-1 8-4 3-7-1z" fill="${c}" opacity=".75"/></svg>`;
const tree = [
  ['pl-[5px]', '', player, 'ml-[9px]', 'Player(self)'],
  'sep',
  ['pl-[3px]', 'i-open', capsule, 'ml-[2px]', 'CapsuleComponent (Inherited)'],
  ['pl-[22px]', '', arrow, 'ml-[3px]', 'ArrowComponent (Inherited)'],
  ['pl-[22px]', '', person('#5d7a62'), 'ml-[3px]', 'Mesh (Inherited)'],
  ['pl-[22px]', '', ico('i-cam', 'w-[15px] h-[13px]'), 'ml-[3px]', 'FirstPersonCamera'],
  ['pl-[12px]', 'i-open', arm, 'ml-[2px]', 'SpringArm'],
  ['pl-[32px]', '', ico('i-cam', 'w-[15px] h-[13px]'), 'ml-[3px]', 'ThirdPersonCamera'],
  ['pl-[22px]', '', sound, 'ml-[3px]', 'CharacterSounds'],
  'sep',
  ['pl-[12px]', '', move('#b8cdb8'), 'ml-[2px]', 'CharacterMovement (Inherited)'],
  ['pl-[12px]', '', move('#e6e6e6'), 'ml-[2px]', 'PawnNoiseEmitter'],
];
document.getElementById('components').innerHTML = tree.map(r => r === 'sep'
  ? '<div class="h-[7px] pt-[3px] mx-[4px]"><div class="h-px bg-[#686868]"></div></div>'
  : `<div class="h-[20px] flex items-center ${r[0]}">${r[1] ? ico('i-open', 'w-[8px] h-[8px] -mt-[2px] mr-[2px]') : ''}${r[2]}<span class="${r[3]} tracking-[.02px] whitespace-nowrap">${r[4]}</span></div>`).join('');

/* ---- my blueprint list ---- */
const head = (t, note = '') => `<div class="h-[24px] shrink-0 bg-[linear-gradient(#2a2a2a,#323232)] flex items-center pl-[1px] pr-[2px]">${ico('i-open', 'w-[8px] h-[8px] mr-[1px]')}<span class="font-bold text-[12.500px] [text-shadow:1px_1px_0_#000]">${t}</span><span class="ml-[5px] mt-[3px] text-[11.300px] tracking-[.02px] text-[#858585] flex-1">${note}</span><div class="w-[20px] h-[18px] bg-[#3e3e3e] rounded-[2px] grid place-items-center">${ico('i-plus', 'w-[12px] h-[12px]')}</div></div>`;
const item = (icon, t, arrow) => `<div class="h-[20px] shrink-0 flex items-center pl-[2px]"><span class="w-[8px]">${arrow ? ico('i-closed', 'w-[6px] h-[10px] -mt-[2px]') : ''}</span><span class="w-[17px] flex justify-center">${icon}</span><span class="ml-[2px] pt-[2px] text-[12.700px] tracking-[.13px] text-[#d4d4d4]">${t}</span></div>`;
const cat = (t) => `<div class="h-[18px] shrink-0 flex items-center pl-[2px]">${ico('i-closed', 'w-[6px] h-[10px] mr-[2px]')}<span class="font-bold text-[12.200px] -tracking-[.02px]">${t}</span></div>`;
const fn = ico('i-f', 'w-[13px] h-[16px]'), gear = ico('i-gear', 'w-[17px] h-[17px]');
const cons = '<svg class="w-[17px] h-[16px]" viewBox="0 0 17 16"><path d="M0 7Q1 3 5 3V.5L10 4.500 5 8.500V6Q2 6 0 7z" fill="#c9d6ee"/><use href="#i-f" x="7" y="3" width="10" height="13"/></svg>';
const section = (h, rows) => `<div class="shrink-0 bg-[#3e3e3e] mb-[2px]">${h}${rows.join('')}</div>`;
document.getElementById('blueprint').innerHTML =
  section(head('Graphs'), [item(ico('i-graph', 'w-[17px] h-[14px]'), 'EventGraph', true)]) +
  section(head('Functions', '(30 Overridable)'), [item(cons, 'ConstructionScript'),
    ...['Camera Control', 'Interaction', 'Manipulate Player Fields', 'Player Burning', 'Equipment Switch', 'Inventory System'].map(cat),
    ...['AttackWithWeapon', 'Kick', 'HasEnoughStamina?', 'ShieldAttack', 'OnHit', 'ReactToHeavyHit'].map(t => item(fn, t, t === 'OnHit'))]) +
  section(head('Macros'), ['InventoryIsEmpty', 'GetPlayerSpeed', 'TraceForEnemy', 'PlaySound', 'TraceForInteractable', 'TraceForObject', 'PlayRandomSound', 'TraceForCompanion'].map(t => item(gear, t))) +
  section(head('Variables'), []);

/* ---- comment boxes: x, y, w, h, title ---- */
const box = (x, y, w, h) => `left:${x}px;top:${y}px;width:${w}px;height:${h}px`;
const grip = '<svg class="absolute right-0 bottom-0 w-[11px] h-[11px]" viewBox="0 0 11 11"><path d="M1 10.500 10.500 1M4 10.500 10.500 4M7 10.500 10.500 7" stroke="#bbb" stroke-width="1.100"/></svg>';
document.getElementById('comments').innerHTML = [
  [502, 100, 769, 69, ''], [1378, 100, 300, 134, ''],
  [502, 222, 348, 780, 'Inventory System'], [898, 222, 369, 171, 'Interact with Objects'], [886, 474, 460, 292, 'Lantern'],
].map(c => `<div class="absolute rounded-[2px] bg-[#bcbcbc]/40 border-2 border-black/15 shadow-[0_3px_6px_rgba(0,0,0,.5)]" style="${box(c[0], c[1], c[2], c[3])}">${c[4] ? `<div class="h-[28px] bg-[#ababab] border-t border-[#c0c0c0] pl-[8px] pt-[7px] font-bold text-[17.500px] tracking-[-.1px] text-[#f0f0f0] [text-shadow:1px_1px_1px_#222] whitespace-nowrap">${c[4]}</div>` : ''}${grip}</div>`).join('');

/* ---- graph nodes ---- */
const pin = (filled) => ico(filled ? 'i-exec' : 'i-execo', 'w-[10px] h-[11px] shrink-0');
const dot = (c, fill) => `<svg class="w-[12px] h-[10px] shrink-0" viewBox="0 0 12 10"><circle cx="5" cy="5" r="3.800" fill="${fill ? c : '#0a0f14'}" stroke="${c}" stroke-width="1.600"/><path d="M9.300 3l2 2-2 2z" fill="${c}"/></svg>`;
const shell = (x, y, w, h, inner) => `<div class="absolute rounded-[5px] border border-black bg-[#131513]/92 shadow-[0_2px_5px_rgba(0,0,0,.6)] overflow-hidden text-[8.500px] tracking-[-.13px] text-[#e2e2e2] whitespace-nowrap" style="${box(x, y, w, h)}">${inner}</div>`;
const outRows = `<div class="pt-[2.400px] pr-[7.500px] flex flex-col items-end">
  <div class="h-[21px] flex items-center gap-[4px]">Pressed${pin(true)}</div>
  <div class="h-[21px] flex items-center gap-[4px]">Released${pin(false)}</div>
  <div class="h-[18px] flex items-center gap-[3px]">Key${dot('#1450b4')}</div></div>`;
const keyNode = (x, y, t) => shell(x, y, 64.500, 82.500, `<div class="h-[17px] border-t border-white/25 bg-[linear-gradient(100deg,#8e1517_0%,#8e1517_15%,#5a1214_35%,#a01a1c_50%,#3c3a3a_78%,#2c2d2c)] flex items-center pl-[7px] text-[9px] font-bold text-white">${ico('i-key', 'w-[12px] h-[12px] mr-[3px]')}${t}</div>${outRows}`);
const fnNode = (x, y, w, t, extra) => shell(x, y, w, extra ? 95.500 : 76.500, `
  <div class="h-[28px] border-t border-white/30 bg-[radial-gradient(ellipse_60%_70%_at_35%_45%,rgba(20,40,60,.5),transparent),linear-gradient(100deg,#5583a0_0%,#4c7894_40%,#42606f_62%,#3a3f42_82%,#2b2c2c)] pl-[7px] flex">
    ${ico('i-fn', 'w-[12px] h-[12px] mt-[2px] mr-[3px]')}<div><div class="mt-[4px] font-bold text-[9px] tracking-[-.05px] text-[#f2f2f2]">${t}</div><div class="mt-[3px] italic text-[8.500px] tracking-[.06px] text-[#93a191]">Target is Player</div></div></div>
  <div class="pt-[2px]"><div class="h-[22px] flex items-center justify-between pl-[7.500px] pr-[7.500px]">${pin(true)}${pin(false)}</div>
  <div class="h-[21px] flex items-center pl-[7.500px]">${dot('#0d8fd0')}<span class="ml-[4px] w-[29px]">Target</span><span class="w-[20px] h-[13px] border border-[#ccc] text-center leading-[10px]">self</span></div>
  ${extra ? `<div class="h-[20px] flex items-center pl-[7.500px]">${dot('#0aa4ee', true)}<span class="ml-[4px]">Lantern</span></div>` : ''}</div>`);
const pill = (x, y, w, t, c, tint) => `<div class="absolute rounded-[12px] border-2 border-[#1c1c1c] ${tint} shadow-[0_2px_4px_rgba(0,0,0,.6),inset_0_1px_0_rgba(255,255,255,.4)] flex items-center justify-end pr-[8px] text-[8.500px] tracking-[0px] text-[#eee] whitespace-nowrap" style="${box(x, y, w, 25)}">${t}<span class="w-[2.500px]"></span>${dot(c, true)}</div>`;

document.getElementById('nodes').innerHTML = [
  keyNode(514.200, 270.200, '1'), keyNode(514.200, 390.200, '2'), keyNode(514.200, 522.200, '3'),
  keyNode(514.200, 642.200, '4'), keyNode(514.200, 750.200, '5'), keyNode(514.200, 882.200, '6'),
  fnNode(634.200, 258.200, 142.500, 'Print All Inventory Items'), fnNode(670.200, 378.200, 111.500, 'Switch Weapon'),
  fnNode(670.200, 510.200, 111.500, 'Drop Weapon'), fnNode(670.200, 630.200, 111.500, 'Switch Shield'),
  fnNode(670.200, 738.200, 111.500, 'Drop Shield'), fnNode(670.200, 870.200, 134.500, 'Switch Armor Enchant'),
  shell(910.200, 270.200, 125.500, 82.500, `<div class="h-[17px] border-t border-white/25 bg-[linear-gradient(100deg,#8e1517_0%,#7e1517_25%,#6a1214_45%,#7a1a1c_60%,#3c3a3a_88%,#2c2d2c)] flex items-center pl-[7px] text-[9px] font-bold text-white tracking-[-.05px]">${ico('i-event', 'w-[12px] h-[12px] mr-[3px]')}InputAction Interact</div>${outRows}`),
  shell(1114.200, 258.200, 93.500, 54.500, `<div class="h-full bg-[radial-gradient(ellipse_38%_34%_at_55%_60%,rgba(110,115,110,.65),rgba(80,85,80,.4)_60%,transparent)] pl-[7px] pt-[5px] flex flex-col"><div class="font-bold text-[9px] tracking-[-.05px]">Interact</div><div class="mt-[3px] italic text-[#8a8c78] tracking-[.05px]">Collapsed Graph</div><div class="mt-[9px]">${pin(true)}</div></div>`),
  keyNode(922.200, 546.200, 'G'),
  shell(1018.200, 546.200, 125.500, 63.500, `<div class="h-[17px] border-t border-white/40 bg-[linear-gradient(100deg,#8a8a8a_0%,#5a5a5a_12%,#3a3a3a_25%,#7e7e7e_45%,#3c3c3c_65%,#2c2d2c)] flex items-center pl-[7px] text-[9px] font-bold text-white">${ico('i-branch', 'w-[11px] h-[11px] mr-[4px]')}Branch</div>
    <div class="pt-[2.400px] pl-[7.500px] pr-[7.500px]"><div class="h-[21px] flex items-center">${pin(true)}<span class="flex-1"></span>True<span class="w-[4px]"></span>${pin(true)}</div>
    <div class="h-[21px] flex items-center"><span class="flex items-center -mt-[2px]">${dot('#900000', true)}<span class="ml-[3px]">Condition</span></span><span class="flex-1"></span>False<span class="w-[4px]"></span>${pin(true)}</div></div>`),
  fnNode(1198.200, 510.200, 111.500, 'Unequip Lantern'), fnNode(1198.200, 618.200, 111.500, 'Equip Lantern', true),
  pill(1030.200, 630.200, 100.500, 'Holding Lantern', '#a80808', 'bg-[radial-gradient(ellipse_45%_70%_at_50%_20%,rgba(150,60,60,.9),transparent),linear-gradient(#5c5c5c,#3c3c3c)]'),
  pill(1078.200, 702.200, 99.500, 'Current Lantern', '#0aa4ee', 'bg-[radial-gradient(ellipse_45%_70%_at_45%_20%,rgba(50,125,160,.95),transparent),linear-gradient(#5c5c5c,#3c3c3c)]'),
].join('');
</script>
</body>
</html>
